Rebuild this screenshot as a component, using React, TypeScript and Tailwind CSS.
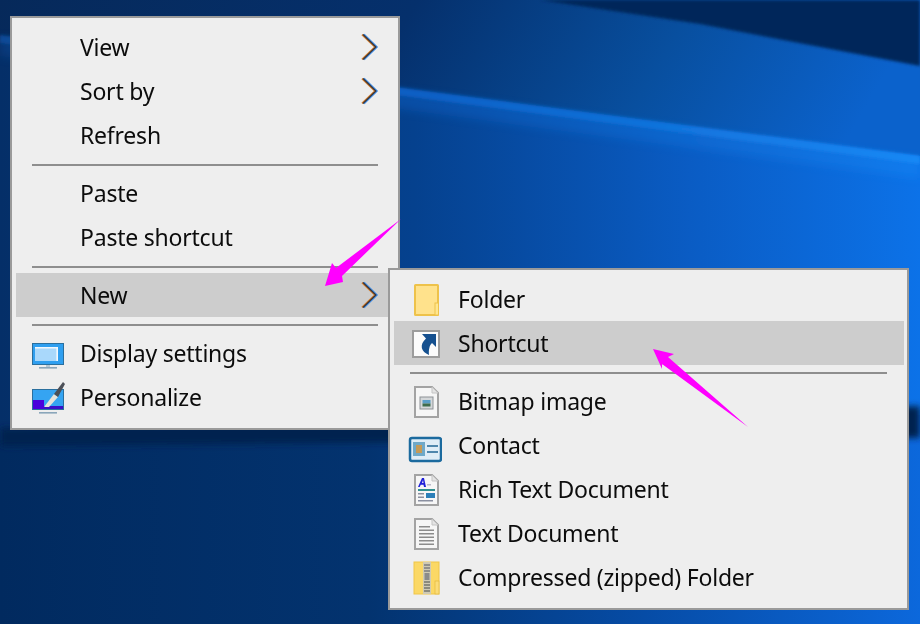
import type { ReactNode } from 'react'

function Wallpaper() {
  return (
    <svg className="absolute inset-0" width="920" height="624" viewBox="0 0 920 624">
      <defs>
        <linearGradient id="lower" x1="0" y1="0" x2="1" y2="0">
          <stop offset="0" stopColor="#052f68" />
          <stop offset="0.45" stopColor="#05418e" />
          <stop offset="0.75" stopColor="#0a5cc4" />
          <stop offset="1" stopColor="#0c72e8" />
        </linearGradient>
        <linearGradient id="upper" x1="0" y1="0" x2="1" y2="0.1">
          <stop offset="0" stopColor="#06295a" />
          <stop offset="0.45" stopColor="#05306c" />
          <stop offset="0.75" stopColor="#084f9f" />
          <stop offset="1" stopColor="#0b62cc" />
        </linearGradient>
        <linearGradient id="beam" x1="0" y1="0" x2="1" y2="0">
          <stop offset="0" stopColor="#0a4a96" />
          <stop offset="0.45" stopColor="#0d5fc4" />
          <stop offset="1" stopColor="#1588f5" />
        </linearGradient>
        <linearGradient id="floor" x1="0" y1="0" x2="1" y2="0">
          <stop offset="0" stopColor="#012a5f" />
          <stop offset="0.4" stopColor="#03336f" />
          <stop offset="0.7" stopColor="#064ca6" />
          <stop offset="1" stopColor="#0c68dc" />
        </linearGradient>
        <filter id="soft" x="-10%" y="-50%" width="120%" height="200%">
          <feGaussianBlur stdDeviation="3" />
        </filter>
        <filter id="softer" x="-10%" y="-50%" width="120%" height="200%">
          <feGaussianBlur stdDeviation="1.5" />
        </filter>
        <filter id="glow" x="-10%" y="-100%" width="120%" height="300%">
          <feGaussianBlur stdDeviation="5" />
        </filter>
      </defs>
      <rect width="920" height="624" fill="url(#lower)" />
      <polygon points="0,0 920,0 920,156 0,36" fill="url(#upper)" />
      <polygon points="400,0 920,0 920,66 700,24 540,0" fill="#03285a" filter="url(#softer)" />
      <polygon points="0,38 920,160 920,178 0,56" fill="url(#beam)" opacity="0.45" filter="url(#glow)" />
      <polygon points="0,35 920,156 920,164 0,43" fill="url(#beam)" filter="url(#softer)" />
      <polygon points="0,440 920,415 920,624 0,624" fill="url(#floor)" />
      <polygon points="0,428 920,406 920,438 0,446" fill="#02244f" filter="url(#soft)" />
    </svg>
  )
}

function Chevron() {
  return (
    <svg className="absolute right-[15px] top-[8px]" width="18" height="28" viewBox="0 0 18 28" fill="none">
      <path d="M3 1.300 16 14 3 26.700" stroke="#3f8ee8" strokeWidth="1.600" />
      <path d="M1 1.700 13.800 14 1 26.300" stroke="#d07a28" strokeWidth="1.600" />
      <path d="M2 1.500 14.900 14 2 26.500" stroke="#33333d" strokeWidth="1.200" />
    </svg>
  )
}

function Item({ label, icon, arrow, active, wide }: { label: string; icon?: ReactNode; arrow?: boolean; active?: boolean; wide?: boolean }) {
  return (
    <div className={`relative flex h-11 items-center ${active ? 'bg-[#cdcdcd]' : ''} ${wide ? 'pl-[12px]' : 'pl-[14px]'}`}>
      <span className={`flex h-9 w-9 shrink-0 blur-[0.4px] ${wide ? 'mr-[16px]' : 'mr-[14px]'}`}>{icon}</span>
      <span className="text-[23px] leading-none tracking-[-0.22px] text-[#0c0c0c] blur-[0.4px]">{label}</span>
      {arrow && <Chevron />}
    </div>
  )
}

function Separator({ top, bottom, wide }: { top: string; bottom: string; wide?: boolean }) {
  return (
    <div className={`${top} ${bottom} ${wide ? 'pl-[16px] pr-[17px]' : 'pl-[16px] pr-[16px]'}`}>
      <div className="h-[2px] bg-[#8e8e8e]" />
    </div>
  )
}

const DisplayIcon = (
  <svg width="36" height="36" viewBox="0 0 36 36">
    <rect x="2.500" y="8.500" width="31" height="21" fill="#2f9ff0" stroke="#2a6f9e" />
    <path d="M5 12h22v14H5z" fill="#a9d8fb" />
    <path d="M5 12h23v14h-1.600V13.600H5z" fill="#f2f8fd" />
    <rect x="9" y="32" width="18" height="1.600" fill="#8aa6ba" />
    <rect x="16" y="30" width="4" height="2" fill="#b7c7d2" />
  </svg>
)

const PersonalizeIcon = (
  <svg width="36" height="36" viewBox="0 0 36 36">
    <rect x="2.500" y="10.500" width="31" height="20" fill="#35a4f2" stroke="#2a6f9e" />
    <rect x="3" y="21" width="11" height="9" fill="#4a00dc" />
    <rect x="14" y="27" width="19" height="3" fill="#3a10c8" />
    <path d="M14 28 24 15l4 3-9 10z" fill="#e6e2da" />
    <path d="M24 15 33 3l2 2-7 13z" fill="#4b4f57" />
    <rect x="9" y="33" width="18" height="1.600" fill="#8aa6ba" />
  </svg>
)

const FolderIcon = (
  <svg width="36" height="36" viewBox="0 0 36 36">
    <rect x="9" y="4" width="23" height="30" rx="0.500" fill="#ffe28c" stroke="#eec24a" strokeWidth="2" />
    <rect x="29" y="22" width="3.500" height="12" fill="#ffe68f" stroke="#eec24a" />
  </svg>
)

const ShortcutIcon = (
  <svg width="36" height="36" viewBox="0 0 36 36">
    <rect x="7" y="6" width="26" height="26" fill="#fbfbfb" stroke="#9c9c9c" strokeWidth="2" />
    <path d="M16 9h14v13l-4-4c-2.500 2-3.500 7-3 12-8-3-10-10-3-16.400z" fill="#15508f" />
  </svg>
)

function Page({ children }: { children?: ReactNode }) {
  return (
    <svg width="36" height="36" viewBox="0 0 36 36">
      <path d="M9 4h17l6 6v24H9z" fill="#f6f6f6" stroke="#a3a3a3" strokeWidth="2" />
      <path d="M26 4v6h6" fill="#e4e4e4" stroke="#c4c4c4" />
      {children}
    </svg>
  )
}

const BitmapIcon = (
  <Page>
    <rect x="14" y="14" width="13" height="12" fill="#d5d8da" stroke="#8d9296" />
    <rect x="16.500" y="17" width="8" height="3.500" fill="#5a9ec8" />
    <rect x="16.500" y="20.500" width="8" height="3" fill="#3f6d4e" />
  </Page>
)

const ContactIcon = (
  <svg width="36" height="36" viewBox="0 0 36 36">
    <rect x="4" y="11" width="31" height="23" rx="2" fill="#dfedf6" stroke="#1b6a9e" strokeWidth="2.500" />
    <rect x="7" y="15" width="12" height="14" fill="#6fa9c8" />
    <rect x="10" y="18" width="6" height="8" fill="#c59a56" />
    <path d="M21 18h11v2H21zM21 24h11v2H21z" fill="#4f87ac" />
  </svg>
)

const RichTextIcon = (
  <Page>
    <path d="M12 16 16 7h2l2 9h-2l-.500-2.200h-2.800L13.700 16zM16 12h1.500L17 9z" fill="#2020d8" />
    <path d="M21 13h4v1.500h-4z" fill="#b9b9c9" />
    <rect x="12" y="18" width="17" height="2" fill="#2f8f8f" />
    <path d="M12 22h6v1.500h-6zM12 25.500h6V27h-6zM12 29h15v1.500H12z" fill="#8a8fa0" />
    <rect x="20" y="22" width="9" height="5" fill="#2c7fb8" />
  </Page>
)

const TextIcon = (
  <Page>
    <path d="M13 11h11v1.500H13zM13 14.500h15V16H13zM13 18h15v1.500H13zM13 21.500h15V23H13zM13 25h15v1.500H13zM13 28.500h15V30H13z" fill="#8c8c8c" />
  </Page>
)

const ZipIcon = (
  <svg width="36" height="36" viewBox="0 0 36 36">
    <rect x="8" y="3" width="25" height="32" fill="#fbd865" stroke="#f0c648" />
    <rect x="29" y="22" width="4" height="13" fill="#fbdc78" stroke="#e4b93c" strokeWidth="0.700" />
    <rect x="17" y="3" width="8" height="32" fill="#cfcab4" />
    <path d="M18 6h6M18 9h6M18 12h6" stroke="#7d7d7d" strokeWidth="1.500" />
    <rect x="18.500" y="14" width="5" height="7" fill="#8b8b8b" />
    <path d="M18 23h6M18 26h6M18 29h6M18 32h6" stroke="#77776c" strokeWidth="1.500" />
  </svg>
)

function Arrows() {
  return (
    <svg className="absolute inset-0 pointer-events-none" width="920" height="624" viewBox="0 0 920 624">
      <polygon points="325,286 332,263 336,268 401,219 342,276 343,282" fill="#ff00ff" />
      <polygon points="653,349 674,354 668,357 748,427 662,364 662,369" fill="#ff00ff" />
    </svg>
  )
}

export default function App() {
  return (
    <div className="relative h-[624px] w-[920px] overflow-hidden bg-[#052f68] font-['Noto_Sans','Open_Sans',sans-serif]">
      <Wallpaper />

      <div className="absolute left-[10px] top-[16px] h-[414px] w-[390px] border-2 border-[#9a9a9a] bg-[#eeeeee] pl-1 pr-1 pt-[7px]">
        <Item label="View" arrow />
        <Item label="Sort by" arrow />
        <Item label="Refresh" />
        <Separator top="pt-[7px]" bottom="pb-[5px]" />
        <Item label="Paste" />
        <Item label="Paste shortcut" />
        <Separator top="pt-[7px]" bottom="pb-[5px]" />
        <Item label="New" arrow active />
        <Separator top="pt-[7px]" bottom="pb-[5px]" />
        <Item label="Display settings" icon={DisplayIcon} />
        <Item label="Personalize" icon={PersonalizeIcon} />
      </div>

      <div className="absolute left-[388px] top-[268px] h-[342px] w-[521px] border-2 border-[#9a9a9a] bg-[#eeeeee] pl-1 pr-[3px] pt-[7px]">
        <Item label="Folder" icon={FolderIcon} wide />
        <Item label="Shortcut" icon={ShortcutIcon} active wide />
        <Separator top="pt-[7px]" bottom="pb-[5px]" wide />
        <Item label="Bitmap image" icon={BitmapIcon} wide />
        <Item label="Contact" icon={ContactIcon} wide />
        <Item label="Rich Text Document" icon={RichTextIcon} wide />
        <Item label="Text Document" icon={TextIcon} wide />
        <Item label="Compressed (zipped) Folder" icon={ZipIcon} wide />
      </div>

      <Arrows />
    </div>
  )
}
